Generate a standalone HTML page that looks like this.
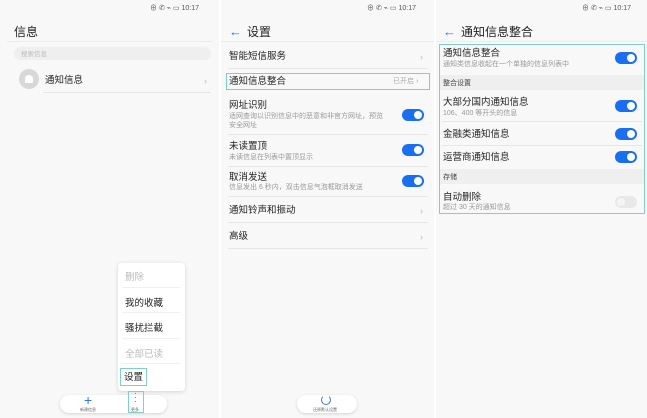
<!DOCTYPE html>
<html><head><meta charset="utf-8"><style>
*{margin:0;padding:0;box-sizing:border-box}
body{width:647px;height:418px;background:#fff;font-family:"Liberation Sans","Noto Sans CJK SC",sans-serif;position:relative;overflow:hidden;color:#222}
.p{position:absolute;top:0;height:418px;background:#f8f8f8}
.a{position:absolute;white-space:nowrap;line-height:1.15}
.t{font-size:9.5px;color:#222;margin-top:1.5px}
.s{font-size:7px;color:#999;margin-top:1px}
.h{font-size:12px;color:#222;margin-top:1.5px}
.sb{font-size:7px;color:#555}
.ln{position:absolute;height:1px;background:#e6e6e6}
.tg{position:absolute;width:22px;height:12px;border-radius:6px;background:#1a6ff0}
.tg:after{content:"";position:absolute;right:2px;top:2px;width:8px;height:8px;border-radius:50%;background:#fff}
.tg.off{background:#e8e8e8}
.tg.off:after{right:auto;left:2px;background:#f4f4f4}
.ch{position:absolute;font-size:9px;color:#bbb;line-height:1.15;margin-top:1.5px}
.sec{position:absolute;background:#efefef;height:15px}
.bx{position:absolute;border:1.5px solid #7fd0c8}
.bk{position:absolute;color:#2a7ce0;font-size:13px;line-height:1.15;margin-top:1.5px}
</style></head><body>
<!-- panel 1 -->
<div class="p" style="left:0;width:219px"></div>
<div class="a sb" style="left:150px;top:5px">⊕ ✆ ⌁ ▭ 10:17</div>
<div class="a h" style="left:14px;top:24px">信息</div>
<div class="ln" style="left:7px;width:205px;top:41px;background:#ececec"></div>
<div class="a" style="left:14px;top:47px;width:197px;height:13px;border-radius:7px;background:#efefef"></div>
<div class="a" style="left:21px;top:51px;font-size:6.5px;color:#bbb">搜索信息</div>
<div class="a" style="left:19px;top:69px;width:20px;height:20px;border-radius:50%;background:#d8d8d8"></div>
<div class="a" style="left:25px;top:75px;width:8px;height:8px;border-radius:4px 4px 1px 1px;background:#fff"></div>
<div class="a t" style="left:45px;top:74px">通知信息</div>
<div class="ch" style="left:204px;top:74px">›</div>
<div class="ln" style="left:43px;width:168px;top:92px"></div>
<!-- menu -->
<div class="a" style="left:118px;top:263px;width:67px;height:128px;background:#fff;border-radius:4px;box-shadow:0 1px 4px rgba(0,0,0,.15)"></div>
<div class="a t" style="left:125px;top:271px;color:#bbb">删除</div>
<div class="ln" style="left:122px;width:58px;top:287px;background:#f0f0f0"></div>
<div class="a t" style="left:125px;top:297px">我的收藏</div>
<div class="ln" style="left:122px;width:58px;top:312px;background:#f0f0f0"></div>
<div class="a t" style="left:125px;top:322px">骚扰拦截</div>
<div class="ln" style="left:122px;width:58px;top:338px;background:#f0f0f0"></div>
<div class="a t" style="left:125px;top:348px;color:#bbb">全部已读</div>
<div class="ln" style="left:122px;width:58px;top:363px;background:#f0f0f0"></div>
<div class="bx" style="left:120px;top:368px;width:27px;height:18px"></div>
<div class="a t" style="left:124px;top:371px">设置</div>
<div class="a" style="left:60px;top:395px;width:107px;height:18px;border-radius:9px;background:#fff;box-shadow:0 1px 3px rgba(0,0,0,.15)"></div>
<div class="a" style="left:84px;top:392px;font-size:14px;color:#2a7ce0">+</div>
<div class="a" style="left:80px;top:408px;font-size:4px;color:#666">新建信息</div>
<div class="bx" style="left:128px;top:391px;width:16px;height:22px"></div>
<div class="a" style="left:134px;top:392px;font-size:8px;line-height:4px;color:#444">·<br>·<br>·</div>
<div class="a" style="left:131px;top:408px;font-size:4px;color:#666">更多</div>
<!-- panel 2 -->
<div class="p" style="left:221px;width:213px"></div>
<div class="a sb" style="left:367px;top:5px">⊕ ✆ ⌁ ▭ 10:17</div>
<div class="bk" style="left:229px;top:23px">←</div>
<div class="a h" style="left:247px;top:24px">设置</div>
<div class="ln" style="left:221px;width:213px;top:41px;background:#ececec"></div>
<div class="a t" style="left:229px;top:50px">智能短信服务</div>
<div class="ch" style="left:420px;top:50px">›</div>
<div class="ln" style="left:228px;width:200px;top:68px"></div>
<div class="bx" style="left:226px;top:73px;width:204px;height:17px"></div>
<div class="a t" style="left:229px;top:75px">通知信息整合</div>
<div class="a s" style="left:393px;top:77px;color:#aaa">已开启 ›</div>
<div class="a t" style="left:229px;top:99px">网址识别</div>
<div class="a s" style="left:229px;top:112px;line-height:8.5px">适网查询以识别信息中的恶意和非官方网址，预览<br>安全网址</div>
<div class="tg" style="left:402px;top:109px"></div>
<div class="ln" style="left:228px;width:200px;top:134px"></div>
<div class="a t" style="left:229px;top:140px">未读置顶</div>
<div class="a s" style="left:229px;top:153px">未读信息在列表中置顶显示</div>
<div class="tg" style="left:402px;top:144px"></div>
<div class="ln" style="left:228px;width:200px;top:166px"></div>
<div class="a t" style="left:229px;top:171px">取消发送</div>
<div class="a s" style="left:229px;top:183px">信息发出 6 秒内，双击信息气泡框取消发送</div>
<div class="tg" style="left:402px;top:175px"></div>
<div class="ln" style="left:228px;width:200px;top:196px"></div>
<div class="a t" style="left:229px;top:204px">通知铃声和振动</div>
<div class="ch" style="left:420px;top:204px">›</div>
<div class="ln" style="left:228px;width:200px;top:222px"></div>
<div class="a t" style="left:229px;top:230px">高级</div>
<div class="ch" style="left:420px;top:230px">›</div>
<div class="ln" style="left:228px;width:200px;top:248px"></div>
<div class="a" style="left:297px;top:395px;width:60px;height:18px;border-radius:9px;background:#fff;box-shadow:0 1px 3px rgba(0,0,0,.15)"></div>
<div class="a" style="left:321px;top:395px;width:10px;height:10px;border-radius:50%;border:1.5px solid #2a7ce0;border-top-color:transparent"></div>
<div class="a" style="left:313px;top:408px;font-size:4px;color:#666">还原默认设置</div>
<!-- panel 3 -->
<div class="p" style="left:436px;width:211px"></div>
<div class="a sb" style="left:582px;top:5px">⊕ ✆ ⌁ ▭ 10:17</div>
<div class="bk" style="left:443px;top:23px">←</div>
<div class="a h" style="left:461px;top:24px">通知信息整合</div>
<div class="ln" style="left:436px;width:211px;top:41px;background:#ececec"></div>
<div class="bx" style="left:439px;top:44px;width:206px;height:170px"></div>
<div class="a t" style="left:443px;top:47px">通知信息整合</div>
<div class="a s" style="left:443px;top:60px">通知类信息收起在一个单独的信息列表中</div>
<div class="tg" style="left:615px;top:52px"></div>
<div class="sec" style="left:440px;top:75px;width:204px"></div>
<div class="a" style="left:443px;top:80px;font-size:7px;color:#444">整合设置</div>
<div class="a t" style="left:443px;top:96px">大部分国内通知信息</div>
<div class="a s" style="left:443px;top:109px">106、400 等开头的信息</div>
<div class="tg" style="left:615px;top:100px"></div>
<div class="ln" style="left:442px;width:200px;top:121px"></div>
<div class="a t" style="left:443px;top:128px">金融类通知信息</div>
<div class="tg" style="left:615px;top:128px"></div>
<div class="ln" style="left:442px;width:200px;top:145px"></div>
<div class="a t" style="left:443px;top:151px">运营商通知信息</div>
<div class="tg" style="left:615px;top:151px"></div>
<div class="sec" style="left:440px;top:169px;width:204px"></div>
<div class="a" style="left:443px;top:174px;font-size:7px;color:#444">存储</div>
<div class="a t" style="left:443px;top:191px">自动删除</div>
<div class="a s" style="left:443px;top:203px">超过 30 天的通知信息</div>
<div class="tg off" style="left:615px;top:196px"></div>
</body></html>
